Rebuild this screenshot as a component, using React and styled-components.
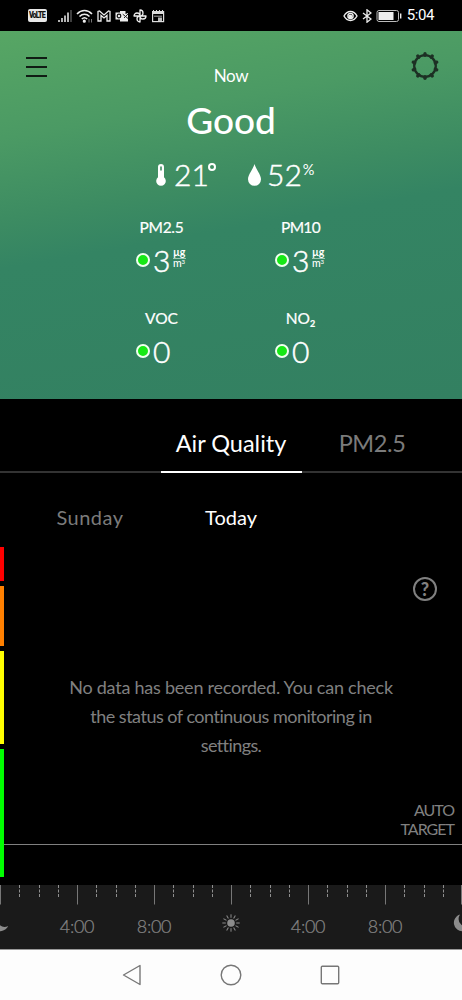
import React from 'react'
import styled, { createGlobalStyle } from 'styled-components'

const SCALE = [
    { color: '#ff0000', size: 34 },
    { color: '#ff8000', size: 60 },
    { color: '#ffff00', size: 93 },
    { color: '#00ff00', size: 128 },
]

const TEETH = Array.from({ length: 10 }, (_, i) => i * 36)
const RAYS = Array.from({ length: 12 }, (_, i) => i * 30)
const TICKS = Array.from({ length: 25 }, (_, i) => i)

function StatusLeft() {
    return (
        <StatusGroup>
            <Volte><span>VoLTE</span></Volte>
            <svg width="14" height="14" viewBox="0 0 14 14" stroke="#eee" strokeWidth="1.5">
                <path d="M1 11v2M4 9v4M7 6.500v6.500M10 3.500v9.500" />
                <path d="M13 1v12" stroke="#555" />
            </svg>
            <svg width="17" height="14" viewBox="0 0 17 14" fill="none" stroke="#eee" strokeWidth="1.600">
                <path d="M1 5c4.500-4.700 10.500-4.700 15 0M3.500 7.500c3-3 7-3 10 0M5.800 10c1.700-1.600 3.700-1.600 5.400 0" />
                <circle cx="8.300" cy="12.200" r=".8" fill="#eee" />
                <path d="M13 10v3.500M15.500 10v3.500" strokeWidth="1" stroke="#777" />
            </svg>
            <svg width="14" height="14" viewBox="0 0 14 14" fill="none" stroke="#eee" strokeWidth="1.300">
                <path d="M1 12V2.500L2.500 2 7 6l4.500-4 1.500.5V12h-3V6.500L7 9 4 6.500V12z" />
            </svg>
            <svg width="14" height="14" viewBox="0 0 14 14">
                <path d="M5 2h5.500v3L13 4v8.500H5z" fill="#eee" />
                <path d="M7.500 5l5.500 4.500M9 9l4-4" stroke="#222" strokeWidth="1" />
                <rect x=".5" y="3.500" width="7" height="7" fill="#eee" />
                <circle cx="4" cy="7" r="1.800" fill="none" stroke="#111" strokeWidth="1.200" />
            </svg>
            <svg width="14" height="14" viewBox="0 0 14 14" fill="none" stroke="#eee" strokeWidth="1.300" strokeLinejoin="round">
                <path d="M7 7V1a3 3 0 0 1 0 6M7 7h6a3 3 0 0 1-6 0M7 7v6a3 3 0 0 1 0-6M7 7H1a3 3 0 0 1 6 0" />
            </svg>
            <svg width="14" height="14" viewBox="0 0 14 14">
                <rect x="1.600" y="2.600" width="11" height="10" fill="none" stroke="#ddd" strokeWidth="1.200" />
                <path d="M1 2.500h12V5H1z" fill="#ddd" />
                <path d="M2.500 1v2M5.500 1v2M8.500 1v2M11.500 1v2" stroke="#ddd" />
                <path d="M3 7.200h8" stroke="#aaa" />
                <path d="M7 8.500h4V12H7z" fill="#bbb" />
            </svg>
        </StatusGroup>
    )
}

function StatusRight() {
    return (
        <StatusGroup>
            <svg width="15" height="14" viewBox="0 0 15 14" fill="none" stroke="#eee" strokeWidth="1.400">
                <path d="M1 7c3.200-6 9.800-6 13 0-3.200 6-9.800 6-13 0z" />
                <circle cx="7.500" cy="7" r="2.600" />
                <circle cx="7.300" cy="7.500" r="1.200" fill="#eee" />
            </svg>
            <svg width="10" height="14" viewBox="0 0 10 14" fill="none" stroke="#eee" strokeWidth="1.300">
                <path d="M1 4l8 6-4 3.200V.8L9 4l-8 6" />
            </svg>
            <svg width="26" height="14" viewBox="0 0 26 14">
                <rect x="1" y="1.500" width="21.500" height="11" rx="2" fill="none" stroke="#bbb" />
                <rect x="2.500" y="3" width="15" height="8" fill="#eee" />
                <path d="M24.700 4.500v5" stroke="#eee" strokeWidth="1.400" />
            </svg>
            <Clock>5:04</Clock>
        </StatusGroup>
    )
}

function Reading({ label, sub, value, unit, gap }) {
    return (
        <ReadingCell>
            <ReadingLabel $gap={gap}>{label}{sub && <Sub>{sub}</Sub>}</ReadingLabel>
            <ReadingRow>
                <Dot />
                <ReadingValue>{value}</ReadingValue>
                {unit && (
                    <Unit>
                        <UnitTop>µg</UnitTop>
                        <UnitBottom>m<Cube>3</Cube></UnitBottom>
                    </Unit>
                )}
            </ReadingRow>
        </ReadingCell>
    )
}

function Moon() {
    return (
        <svg width="18" height="18" viewBox="0 0 18 18">
            <path d="M7 .5A8.500 8.500 0 1 0 17.200 12 8 8 0 0 1 7 .5z" fill="#8c8c8c" />
        </svg>
    )
}

function Sun() {
    return (
        <svg width="18" height="18" viewBox="0 0 18 18">
            <circle cx="9" cy="9" r="3.800" fill="#8c8c8c" />
            {RAYS.map((a) => (
                <path key={a} d="M9 .3v3.500" stroke="#8c8c8c" strokeWidth="1" transform={`rotate(${a} 9 9)`} />
            ))}
        </svg>
    )
}

function App() {
    return (
        <Screen>
            <GlobalStyle />
            <StatusBar>
                <StatusLeft />
                <StatusRight />
            </StatusBar>

            <Hero>
                <TopBar>
                    <MenuButton><i /><i /><i /></MenuButton>
                    <Now>Now</Now>
                    <svg width="28" height="28" viewBox="0 0 28 28">
                        <circle cx="14" cy="14" r="10.800" fill="none" stroke="#1d3024" strokeWidth="2.300" />
                        {TEETH.map((a) => (
                            <path key={a} d="M14 1.700v1.500" stroke="#1d3024" strokeWidth="3.400" strokeLinecap="round" transform={`rotate(${a} 14 14)`} />
                        ))}
                    </svg>
                </TopBar>
                <Verdict>Good</Verdict>
                <Climate>
                    <svg width="10" height="22" viewBox="0 0 10 22">
                        <path d="M2 3a3 3 0 0 1 6 0v10.300a4.800 4.800 0 1 1-6 0z" fill="#fff" />
                        <path d="M5 2.500v4" stroke="#3f8f62" strokeWidth="1.600" />
                    </svg>
                    <ClimateValue $w={42}>21<Degree /></ClimateValue>
                    <svg width="13" height="22" viewBox="0 0 13 22">
                        <path d="M6.500 0C8 5.500 13 10.500 13 15.300a6.500 6.500 0 0 1-13 0C0 10.500 5 5.500 6.500 0z" fill="#fff" />
                    </svg>
                    <ClimateValue>52<Percent>%</Percent></ClimateValue>
                </Climate>
                <Readings>
                    <Reading label="PM2.5" value="3" gap={-0.3} unit />
                    <Reading label="PM10" value="3" gap={-0.7} unit />
                    <Reading label="VOC" value="0" />
                    <Reading label="NO" sub="2" value="0" />
                </Readings>
            </Hero>

            <Tabs>
                <Tab />
                <Tab $active>Air Quality</Tab>
                <Tab $gap={-0.4}>PM2.5</Tab>
            </Tabs>
            <Days>
                <Day $gap={0.5}>Sunday</Day>
                <Day $active>Today</Day>
            </Days>

            <Chart>
                <Scale>
                    {SCALE.map((s) => <Band key={s.color} $color={s.color} $size={s.size} />)}
                </Scale>
                <Plot>
                    <Help>?</Help>
                    <Message>
                        <Line $gap={-0.23}>No data has been recorded. You can check</Line>
                        <Line $gap={-0.5}>the status of continuous monitoring in</Line>
                        <Line $gap={-0.6}>settings.</Line>
                    </Message>
                    <Target>AUTO<br />TARGET</Target>
                </Plot>
            </Chart>

            <Axis>
                <svg width="462" height="20" viewBox="0 0 462 20">
                    {TICKS.map((i) => (
                        <path
                            key={i}
                            d={i % 4 ? `M${Math.round(i * 19.25) + 0.5} 0v12` : `M${Math.min(i * 19.25, 461) + 0.5} 0v19.500`}
                            stroke={i % 4 ? '#8f8f8f' : '#777'}
                            strokeDasharray={i % 4 ? '3 1.500' : 'none'}
                        />
                    ))}
                </svg>
                <Hours>
                    <Hour><Moon /></Hour>
                    <Hour>4:00</Hour>
                    <Hour>8:00</Hour>
                    <Hour><Sun /></Hour>
                    <Hour>4:00</Hour>
                    <Hour>8:00</Hour>
                    <Hour><Moon /></Hour>
                </Hours>
            </Axis>

            <NavBar>
                <svg width="20" height="22" viewBox="0 0 20 22" fill="none" stroke="#777" strokeWidth="1.400" strokeLinejoin="round">
                    <path d="M1.500 11L18 1.500v19z" />
                </svg>
                <svg width="22" height="22" viewBox="0 0 22 22" fill="none" stroke="#777" strokeWidth="1.400">
                    <circle cx="11" cy="11" r="9.800" />
                </svg>
                <svg width="20" height="20" viewBox="0 0 20 20" fill="none" stroke="#777" strokeWidth="1.400">
                    <rect x="1.300" y="1.300" width="17.400" height="17.400" rx="1" />
                </svg>
            </NavBar>
        </Screen>
    )
}

export default App


const GlobalStyle = createGlobalStyle`
    body {
        margin: 0;
        background: #000;
    }
    * {
        box-sizing: border-box;
    }
    svg {
        display: block;
        flex-shrink: 0;
    }
`

const Screen = styled.div`
    display: flex;
    flex-direction: column;
    width: 462px;
    height: 1000px;
    overflow: hidden;
    background: #000;
    color: #fff;
    font-family: Lato, "Liberation Sans", sans-serif;
`

const StatusBar = styled.div`
    display: flex;
    justify-content: space-between;
    flex: none;
    height: 31px;
    padding: 0 28px;
`
const StatusGroup = styled.div`
    display: flex;
    align-items: center;
    gap: 4px;
`
const Volte = styled.div`
    display: flex;
    align-items: center;
    justify-content: center;
    width: 19px;
    height: 13px;
    margin-right: 7px;
    border-radius: 2px;
    background: #e8e8e8;
    color: #111;
    font: 900 8px/13px Roboto, sans-serif;
    letter-spacing: -1px;

    span {
        margin-left: -1px;
        transform: scale(0.9, 1.15);
    }
`
const Clock = styled.span`
    margin-left: 1px;
    font: 400 15px/31px Roboto, sans-serif;
    letter-spacing: -0.4px;
`

const Hero = styled.div`
    flex: none;
    height: 368px;
    background: linear-gradient(170deg, #57a664 0%, #4b9a64 24%, #3d8c62 42%, #348463 53%, #338061 100%);
`
const TopBar = styled.div`
    display: flex;
    justify-content: space-between;
    height: 63px;
    padding: 21px 23px 0 25px;
`
const MenuButton = styled.div`
    display: flex;
    flex-direction: column;
    gap: 7px;
    width: 28px;
    padding: 5px 6px 0 1px;

    i {
        height: 2px;
        background: #101c14;
    }
`
const Now = styled.span`
    margin: 14px 2px 0 0;
    font-size: 17px;
    line-height: 20px;
    letter-spacing: -0.3px;
`
const Verdict = styled.div`
    height: 54px;
    font-size: 37px;
    font-weight: 500;
    line-height: 52px;
    text-align: center;
`
const Climate = styled.div`
    display: flex;
    align-items: center;
    height: 54px;
    padding-left: 156px;
`
const ClimateValue = styled.div`
    display: flex;
    width: ${(p) => p.$w ? `${p.$w}px` : 'auto'};
    margin: -2px ${(p) => p.$w ? 32 : 0}px 0 ${(p) => p.$w ? 8 : 6}px;
    font-size: 30px;
    font-weight: 300;
    line-height: 34px;
    -webkit-text-stroke: 0.5px #fff;
`
const Degree = styled.i`
    flex: none;
    width: 8px;
    height: 8px;
    margin: 6px 0 0 -1px;
    border: 2px solid #fff;
    border-radius: 50%;
`
const Percent = styled.span`
    margin-left: 1px;
    font-size: 14.5px;
    font-weight: 400;
    line-height: 25px;
    -webkit-text-stroke: 0;
`

const Readings = styled.div`
    display: grid;
    grid-template-columns: 139px 139px;
    grid-auto-rows: 91px;
    justify-content: center;
    padding-top: 14px;
`
const ReadingCell = styled.div`
    display: flex;
    flex-direction: column;
`
const ReadingLabel = styled.div`
    height: 22px;
    font-size: 15.5px;
    line-height: 22px;
    text-align: center;
    letter-spacing: ${(p) => p.$gap || 0}px;
    -webkit-text-stroke: 0.2px #fff;
`
const Sub = styled.span`
    position: relative;
    top: 3px;
    font-size: 9px;
    font-weight: 700;
    line-height: 9px;
`
const ReadingRow = styled.div`
    display: flex;
    align-items: center;
    height: 32px;
    margin-top: 6px;
    padding-left: 44px;
`
const Dot = styled.i`
    width: 14px;
    height: 14px;
    border: 2px solid #f0fff0;
    border-radius: 50%;
    background: #16e816;
`
const ReadingValue = styled.span`
    width: 18px;
    margin: 0 0 0 3px;
    font-size: 30px;
    font-weight: 300;
    line-height: 32px;
    -webkit-text-stroke: 0.5px #fff;
`
const Unit = styled.div`
    display: flex;
    flex-direction: column;
    width: 13px;
    margin: -4px 0 0 2px;
    font-size: 10.5px;
    font-weight: 700;
    line-height: 9px;
    letter-spacing: -0.2px;
`
const UnitTop = styled.span`
    height: 11px;
    border-bottom: 1px solid #9cc7b4;
`
const UnitBottom = styled.span`
    display: flex;
    height: 9px;
    font-weight: 500;
`
const Cube = styled.span`
    font-size: 6px;
    line-height: 6px;
`

const Tabs = styled.div`
    display: flex;
    flex: none;
    height: 74px;
    border-bottom: 2px solid #333;
    padding-left: 19.5px;
`
const Tab = styled.div`
    width: 141px;
    margin-bottom: -2px;
    border-bottom: 2px solid ${(p) => p.$active ? '#fff' : 'transparent'};
    color: ${(p) => p.$active ? '#fff' : '#7b7b7b'};
    font-size: 23.500px;
    letter-spacing: ${(p) => p.$gap || 0}px;
    line-height: 89px;
    text-align: center;
    white-space: nowrap;
`
const Days = styled.div`
    display: flex;
    flex: none;
    height: 74px;
    padding-left: 19.5px;
`
const Day = styled.div`
    width: 141px;
    color: ${(p) => p.$active ? '#fff' : '#7b7b7b'};
    font-size: 20px;
    letter-spacing: ${(p) => p.$gap || 0}px;
    line-height: 88px;
    text-align: center;
`

const Chart = styled.div`
    display: flex;
    flex: none;
    height: 338px;
`
const Scale = styled.div`
    display: flex;
    flex-direction: column;
    gap: 5px;
    width: 4px;
`
const Band = styled.div`
    height: ${(p) => p.$size}px;
    background: ${(p) => p.$color};
`
const Plot = styled.div`
    display: flex;
    flex-direction: column;
    flex: 1;
    padding-top: 30px;
    color: #808080;
`
const Help = styled.div`
    align-self: flex-end;
    width: 24px;
    height: 24px;
    margin-right: 25px;
    border: 2px solid #808080;
    border-radius: 50%;
    font-size: 18px;
    font-weight: 900;
    line-height: 20px;
    text-align: center;
`
const Message = styled.div`
    margin: 72px 4px 0 0;
    font-size: 18px;
    line-height: 29px;
    text-align: center;
`
const Line = styled.div`
    letter-spacing: ${(p) => p.$gap || 0}px;
    white-space: nowrap;
`
const Target = styled.div`
    margin-top: 40px;
    padding: 0 8px 6px 0;
    border-bottom: 1px solid #808080;
    font-size: 16px;
    line-height: 19px;
    letter-spacing: -1px;
    text-align: right;
`

const Axis = styled.div`
    flex: none;
    height: 64px;
    background: #1a1a1a;
`
const Hours = styled.div`
    display: flex;
    width: 539px;
    margin-left: -38.5px;
`
const Hour = styled.div`
    display: flex;
    justify-content: center;
    width: 77px;
    padding-top: 9px;
    color: #868686;
    font-size: 18px;
    font-weight: 300;
    letter-spacing: -0.3px;
    line-height: 24px;
    -webkit-text-stroke: 0.2px #868686;
`

const NavBar = styled.div`
    display: flex;
    align-items: center;
    justify-content: center;
    flex: 1;
    gap: 78px;
    border-top: 1px solid #999;
    background: #fdfdfd;
`
